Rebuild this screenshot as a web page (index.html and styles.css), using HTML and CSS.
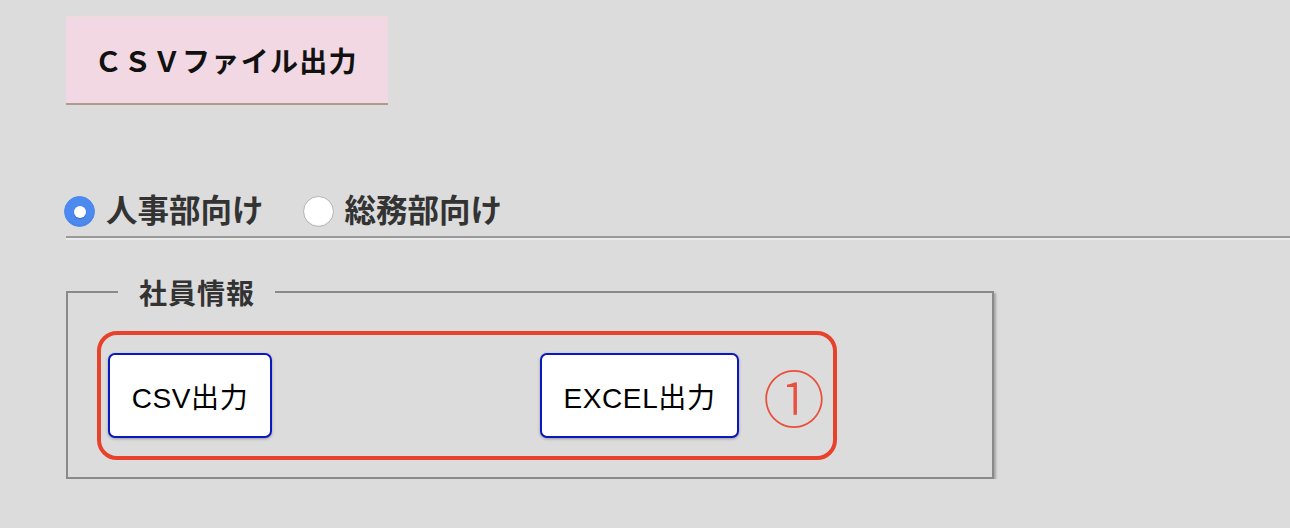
FILE: index.html
```html
<!DOCTYPE html>
<html lang="ja">
<head>
<meta charset="utf-8">
<title>CSVファイル出力</title>
<link rel="stylesheet" href="styles.css">
</head>
<body>
<div class="page">
  <div class="title-box">ＣＳＶファイル出力</div>

  <div class="radio-row">
    <label class="radio-item">
      <input type="radio" name="dept" class="radio" checked>
      <span class="radio-label">人事部向け</span>
    </label>
    <label class="radio-item second">
      <input type="radio" name="dept" class="radio">
      <span class="radio-label">総務部向け</span>
    </label>
  </div>

  <hr class="divider">

  <fieldset class="group">
    <legend class="group-title">社員情報</legend>
    <div class="highlight">
      <button class="out-btn csv">CSV出力</button>
      <button class="out-btn excel">EXCEL出力</button>
      <span class="marker">①</span>
    </div>
  </fieldset>
</div>
</body>
</html>
```

FILE: styles.css
```css
html, body {
  margin: 0;
  padding: 0;
  background: #dcdcdc;
}

body {
  font-family: "Noto Sans CJK JP", "Noto Sans", sans-serif;
  color: #111;
}

.page {
  padding: 16px 0 0 66px;
}

.title-box {
  box-sizing: border-box;
  width: 322px;
  height: 89px;
  background: #f1d8e2;
  border-top: 1px solid #ecdfd6;
  border-bottom: 2px solid #b09a8c;
  display: flex;
  align-items: center;
  justify-content: center;
  padding-right: 2px;
  font-size: 28px;
  font-weight: 700;
  letter-spacing: 1.3px;
  color: #111;
}

.radio-row {
  display: flex;
  align-items: center;
  height: 40px;
  margin-top: 86px;
  margin-left: -2px;
}

.radio-item {
  display: flex;
  align-items: center;
}

.radio-item.second {
  margin-left: 39px;
}

.radio {
  appearance: none;
  -webkit-appearance: none;
  box-sizing: border-box;
  width: 31px;
  height: 31px;
  margin: 0 11px 0 0;
  border-radius: 50%;
  background: #fff;
  border: 1px solid #b4b4b4;
  box-shadow: inset 0 -1px 1px rgba(0,0,0,0.08);
  position: relative;
}

.radio:checked {
  background: #4d8af0;
  border-color: #4d8af0;
}

.radio:checked::after {
  content: "";
  position: absolute;
  left: 9px;
  top: 9px;
  width: 12px;
  height: 12px;
  border-radius: 50%;
  background: #fff;
  box-shadow: 0 1px 1px rgba(0,0,0,0.25);
}

.radio-label {
  font-size: 31.5px;
  font-weight: 700;
  color: #333;
  line-height: 40px;
  position: relative;
  top: -3px;
}

.divider {
  height: 0;
  margin: 5px 0 0 0;
  border: 0;
  border-top: 2px solid #999;
  border-bottom: 2px solid #ebebeb;
}

.group {
  box-sizing: border-box;
  width: 928px;
  margin: 32px 0 0 0;
  padding: 0 0 17px 29px;
  border: 2px solid #8a8a8a;
  box-shadow: 2px 2px 2px rgba(0,0,0,0.25);
}

.group-title {
  margin-left: 21px;
  padding: 0 20px 0 21px;
  font-size: 28px;
  font-weight: 700;
  line-height: 40px;
  letter-spacing: 1px;
  color: #333;
}

.highlight {
  box-sizing: border-box;
  width: 740px;
  height: 129px;
  margin-top: 19px;
  border: 4px solid #e8412c;
  border-radius: 20px;
  display: flex;
  align-items: center;
  padding-left: 7px;
}

.out-btn {
  box-sizing: border-box;
  height: 85px;
  background: #fff;
  border: 2px solid #0a18c0;
  border-radius: 7px;
  box-shadow: 0 1px 3px rgba(0,0,0,0.3);
  font-family: "Liberation Sans", "Noto Sans CJK JP", sans-serif;
  font-size: 28px;
  letter-spacing: 0.6px;
  color: #000;
  padding: 0;
}

.out-btn.csv {
  width: 164px;
}

.out-btn.excel {
  width: 199px;
  margin-left: 268px;
}

.marker {
  margin-left: 24px;
  font-size: 62px;
  line-height: 62px;
  font-weight: 300;
  color: #e8503c;
}
```
